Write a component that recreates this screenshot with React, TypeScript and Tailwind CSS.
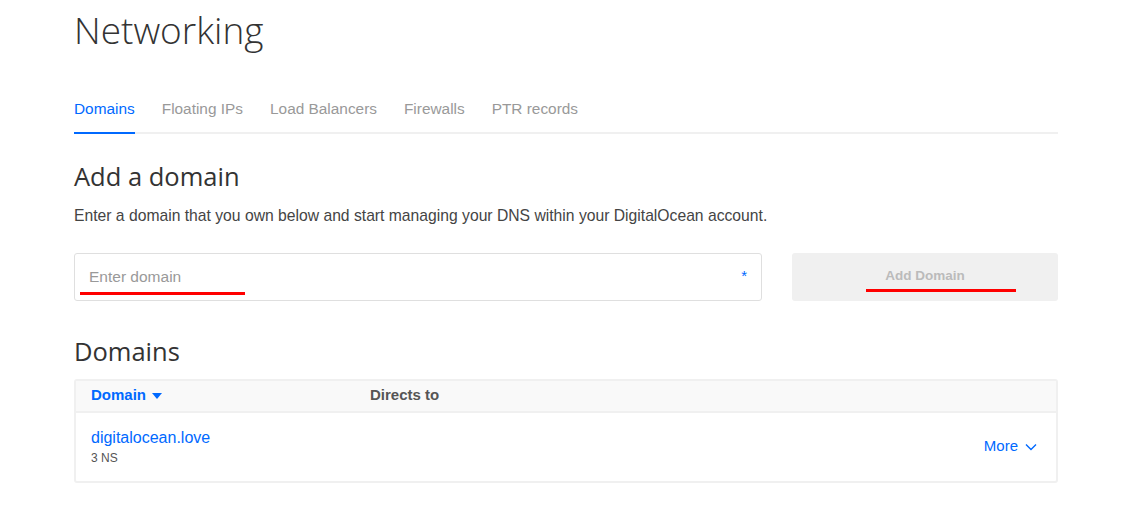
import React from "react";

const tabs = ["Domains", "Floating IPs", "Load Balancers", "Firewalls", "PTR records"];

export default function App() {
  return (
    <div
      className="min-h-[515px] w-full bg-white text-[#444]"
      style={{ fontFamily: '"Liberation Sans", Arial, sans-serif' }}
    >
      <div className="ml-[74px] w-[984px]">
        <h1
          className="pt-[7px] text-[37px] font-light leading-[46px] text-[#333]"
          style={{ fontFamily: '"Open Sans", sans-serif' }}
        >
          Networking
        </h1>

        {/* tabs */}
        <div className="mt-[44px] flex border-b-2 border-[#f0f0f0]">
          {tabs.map((t, i) => (
            <div
              key={t}
              className={
                i === 0
                  ? "-mb-[2px] mr-[27px] border-b-2 border-[#0069ff] pb-[12px] text-[15.4px] leading-[23px] text-[#0069ff]"
                  : "mr-[27px] pb-[12px] text-[15.4px] leading-[23px] text-[#999]"
              }
            >
              {t}
            </div>
          ))}
        </div>

        {/* add a domain */}
        <h2
          className="mt-[26px] text-[25.5px] leading-[32px] text-[#333]"
          style={{ fontFamily: '"Open Sans", sans-serif' }}
        >
          Add a domain
        </h2>
        <p className="mt-[12px] text-[15.7px] text-[#444]">
          Enter a domain that you own below and start managing your DNS within your DigitalOcean account.
        </p>

        <div className="mt-[25px] flex gap-[30px]">
          <div className="relative flex h-[48px] w-[688px] items-center justify-between rounded-[3px] border border-[#dfdfdf] px-[14px]">
            <span className="text-[15.5px] text-[#999]">Enter domain</span>
            <span className="text-[15px] text-[#0069ff]">*</span>
            <div className="absolute left-[5px] top-[38px] h-[3px] w-[165px] bg-[#ff0000]" />
          </div>
          <div className="relative flex h-[48px] flex-1 items-center justify-center rounded-[3px] bg-[#f0f0f0]">
            <span className="text-[13.5px] font-bold text-[#bbb]">Add Domain</span>
            <div className="absolute left-[74px] top-[36px] h-[3px] w-[150px] bg-[#ff0000]" />
          </div>
        </div>

        {/* domains table */}
        <h2
          className="mt-[34px] text-[25.5px] leading-[32px] text-[#333]"
          style={{ fontFamily: '"Open Sans", sans-serif' }}
        >
          Domains
        </h2>
        <div className="mt-[12px] overflow-hidden rounded-[3px] border-2 border-[#f0f0f0]">
          <div className="flex h-[32px] items-center border-b-2 border-[#f0f0f0] bg-[#f9f9f9] px-[15px] text-[15px] font-bold">
            <div className="flex w-[279px] items-center text-[#0069ff]">
              Domain
              <svg className="ml-[6px]" width="10" height="6" viewBox="0 0 10 6">
                <path d="M0 0h10L5 6z" fill="#0069ff" />
              </svg>
            </div>
            <div className="text-[#555]">Directs to</div>
          </div>
          <div className="flex h-[68px] items-center justify-between px-[15px]">
            <div className="mt-[2px]">
              <div className="text-[16px] leading-[18px] text-[#0069ff]">digitalocean.love</div>
              <div className="mt-[2px] text-[12px] text-[#555]">3 NS</div>
            </div>
            <div className="mr-[4px] flex items-center text-[15px] text-[#0069ff]">
              More
              <svg className="ml-[7px]" width="12" height="8" viewBox="0 0 12 8">
                <path d="M1 1.5l5 5 5-5" fill="none" stroke="#0069ff" strokeWidth="1.4" />
              </svg>
            </div>
          </div>
        </div>
      </div>
    </div>
  );
}
